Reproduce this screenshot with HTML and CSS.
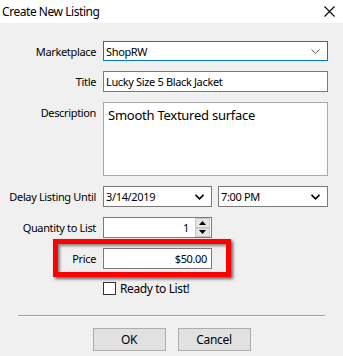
FILE: index.html
```html
<!DOCTYPE html>
<html>
<head>
<meta charset="utf-8">
<link rel="stylesheet" href="styles.css">
</head>
<body>
<div class="window">
  <div class="titlebar">
    <span class="title">Create New Listing</span>
    <svg class="close" width="11" height="11" viewBox="0 0 11 11"><path d="M0.5 0.5 L10.5 10.5 M10.5 0.5 L0.5 10.5" stroke="#000" stroke-width="1.1" fill="none"/></svg>
  </div>
  <div class="content">
    <div class="form">
      <label class="lbl">Marketplace</label>
      <div class="field combo focused"><span>ShopRW</span><svg class="chev light" width="9" height="5" viewBox="0 0 9 5"><path d="M0.5 0.5 L4.5 4.5 L8.5 0.5" stroke="#555" stroke-width="1" fill="none"/></svg></div>

      <label class="lbl">Title</label>
      <div class="field text"><span>Lucky Size 5 Black Jacket</span></div>

      <label class="lbl top">Description</label>
      <div class="field area"><span>Smooth Textured surface</span></div>

      <label class="lbl">Delay Listing Until</label>
      <div class="pair">
        <div class="field combo half"><span>3/14/2019</span><svg class="chev" width="9" height="6" viewBox="0 0 9 6"><path d="M0.5 0.8 L4.5 4.8 L8.5 0.8" stroke="#000" stroke-width="1.6" fill="none"/></svg></div>
        <div class="field combo half2"><span>7:00 PM</span><svg class="chev" width="9" height="6" viewBox="0 0 9 6"><path d="M0.5 0.8 L4.5 4.8 L8.5 0.8" stroke="#000" stroke-width="1.6" fill="none"/></svg></div>
      </div>

      <label class="lbl">Quantity to List</label>
      <div class="field text num spin"><span>1</span>
        <div class="spinner">
          <div class="sbtn"><svg width="7" height="4" viewBox="0 0 7 4"><path d="M0 4 L3.5 0 L7 4 Z" fill="#000"/></svg></div>
          <div class="sbtn"><svg width="7" height="4" viewBox="0 0 7 4"><path d="M0 0 L3.5 4 L7 0 Z" fill="#000"/></svg></div>
        </div>
      </div>

      <label class="lbl">Price</label>
      <div class="field text num price"><span>$50.00</span></div>

      <div></div>
      <div class="check"><span class="box"></span><span>Ready to List!</span></div>
    </div>
    <div class="highlight"></div>
    <div class="sep"></div>
    <div class="buttons">
      <button class="btn">OK</button>
      <button class="btn">Cancel</button>
    </div>
  </div>
</div>
</body>
</html>
```
FILE: styles.css
```css
* { box-sizing: border-box; }
html, body { margin: 0; padding: 0; }
body {
  width: 343px;
  height: 356px;
  background: #f0f0f0;
  font-family: "Noto Sans", "DejaVu Sans", sans-serif;
  font-size: 11px;
  letter-spacing: -0.35px;
  color: #000;
  overflow: hidden;
}
.window { position: relative; width: 343px; height: 356px; }
.titlebar {
  height: 23px;
  background: #fff;
  display: flex;
  align-items: center;
  justify-content: space-between;
  padding: 0 8px 0 2px;
}
.title { font-size: 12px; letter-spacing: -0.45px; }
.close { display: block; }
.content { position: relative; padding-top: 18px; }
.form {
  display: grid;
  grid-template-columns: 96px 225px;
  column-gap: 7px;
  row-gap: 10px;
  align-items: center;
}
.lbl { text-align: right; white-space: nowrap; }
.lbl.top { align-self: start; padding-top: 3px; }
.field {
  height: 21px;
  background: #fff;
  border: 1px solid #7a7a7a;
  display: flex;
  align-items: center;
  padding: 0 2px;
  white-space: nowrap;
}
.combo { justify-content: space-between; padding-right: 7px; }
.combo.focused { border-color: #0078d7; height: 20px; }
.field.area {
  height: 74px;
  border-color: #a9a9a9;
  align-items: flex-start;
  padding: 3px 4px;
  font-size: 13px;
  letter-spacing: -0.25px;
}
.pair { display: flex; gap: 6px; }
.half { width: 109px; }
.half2 { width: 110px; }
.num { width: 109px; justify-content: flex-end; padding-right: 4px; }
.spin { padding-right: 1px; }
.spin span { margin-right: 6px; }
.spinner { display: flex; flex-direction: column; gap: 0; height: 19px; }
.sbtn {
  width: 15px;
  height: 9.5px;
  background: #e6e6e6;
  border: 1px solid #c8c8c8;
  display: flex;
  align-items: center;
  justify-content: center;
}
.sbtn svg { display: block; }
.check { display: flex; align-items: center; gap: 4px; margin-top: 3px; height: 13px; font-size: 12px; letter-spacing: -0.4px; }
.box { width: 13px; height: 13px; border: 1px solid #333; background: #fff; display: block; }
.highlight {
  position: absolute;
  left: 53px;
  top: 216px;
  width: 178px;
  height: 38px;
  border: 5px solid #ff0000;
  box-shadow: 2px 2px 3px rgba(0,0,0,0.6), inset 2px 2px 3px rgba(0,0,0,0.45);
}
.sep {
  margin: 20px 18px 0 18px;
  height: 2px;
  border-top: 1px solid #a0a0a0;
  border-bottom: 1px solid #fff;
}
.buttons {
  display: flex;
  justify-content: center;
  gap: 12px;
  margin-top: 11px;
}
.btn {
  width: 73px;
  height: 23px;
  background: #e1e1e1;
  border: 1px solid #adadad;
  font-family: inherit;
  font-size: 12px;
  letter-spacing: -0.3px;
  color: #000;
  padding: 0;
  margin: 0;
}
```
